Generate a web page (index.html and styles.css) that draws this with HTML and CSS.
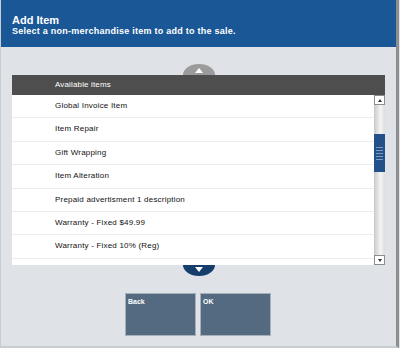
FILE: index.html
```html
<!DOCTYPE html>
<html lang="en">
  <head>
    <meta charset="UTF-8" />
    <title>Add Item</title>
    <link rel="stylesheet" href="styles.css">
  </head>
  <body>
    <div class="screen">
      <header class="title-bar">
        <div class="title">Add Item</div>
        <div class="subtitle">Select a non-merchandise item to add to the sale.</div>
      </header>

      <section class="picker">
        <div class="page-arrow up"><span class="tri"></span></div>

        <div class="list">
          <div class="list-head">Available items</div>
          <div class="list-body">
            <div class="rows">
              <div class="row">Global Invoice Item</div>
              <div class="row">Item Repair</div>
              <div class="row">Gift Wrapping</div>
              <div class="row">Item Alteration</div>
              <div class="row">Prepaid advertisment 1 description</div>
              <div class="row">Warranty - Fixed $49.99</div>
              <div class="row">Warranty - Fixed 10% (Reg)</div>
              <div class="row"></div>
            </div>
            <div class="scrollbar">
              <div class="sb-btn"><span class="sb-up"></span></div>
              <div class="sb-track">
                <div class="sb-thumb">
                  <span></span><span></span><span></span><span></span><span></span>
                </div>
              </div>
              <div class="sb-btn"><span class="sb-down"></span></div>
            </div>
          </div>
        </div>

        <div class="page-arrow down"><span class="tri"></span></div>
      </section>

      <footer class="actions">
        <div class="action">Back</div>
        <div class="action">OK</div>
      </footer>
    </div>
  </body>
</html>
```

FILE: styles.css
```css
html,
body {
  margin: 0;
  padding: 0;
  background: #dfe2e6;
}

.screen {
  width: 395px;
  height: 346px;
  background: #dfe2e6;
  border-left: 1px solid #c9ccd1;
  border-right: 3px solid #8e8e8e;
  border-bottom: 2px solid #c9ccd1;
  font-family: "Liberation Sans", Arial, sans-serif;
  display: flex;
  flex-direction: column;
}

.title-bar {
  background: #1a5797;
  color: white;
  height: 47px;
  padding: 14px 0 0 11px;
  box-sizing: border-box;
  font-weight: bold;
}

.title-bar .title {
  font-size: 11px;
  line-height: 12px;
}

.title-bar .subtitle {
  font-size: 9px;
  line-height: 11px;
  letter-spacing: 0.25px;
}

.picker {
  margin: 17px 11px 0 11px;
  display: flex;
  flex-direction: column;
  align-items: center;
}

.page-arrow {
  width: 32px;
  height: 11px;
  display: flex;
  justify-content: center;
  align-items: center;
}

.page-arrow.up {
  background: #9b9b9b;
  border-radius: 16px 16px 0 0 / 11px 11px 0 0;
  padding-top: 2px;
  box-sizing: border-box;
}

.page-arrow.down {
  background: #163e6c;
  border-radius: 0 0 16px 16px / 0 0 11px 11px;
  padding-bottom: 2px;
  box-sizing: border-box;
}

.page-arrow .tri {
  width: 0;
  height: 0;
  border-left: 4px solid transparent;
  border-right: 4px solid transparent;
}

.page-arrow.up .tri {
  border-bottom: 5px solid white;
}

.page-arrow.down .tri {
  border-top: 5px solid white;
}

.list {
  align-self: stretch;
  background: white;
}

.list-head {
  background: #4e4e4e;
  color: white;
  height: 20px;
  line-height: 20px;
  padding-left: 43px;
  font-size: 8px;
  letter-spacing: 0.15px;
}

.list-body {
  height: 170px;
  display: flex;
  overflow: hidden;
}

.rows {
  flex: 1;
}

.row {
  height: 23.4px;
  line-height: 22px;
  box-sizing: border-box;
  border-bottom: 1px solid #ececec;
  padding-left: 43px;
  font-size: 8px;
  letter-spacing: 0.2px;
  color: #111;
}

.scrollbar {
  width: 11px;
  display: flex;
  flex-direction: column;
  background: linear-gradient(to right, #c9c9c9, #f4f4f4 60%, #dcdcdc);
}

.sb-btn {
  height: 10px;
  box-sizing: border-box;
  border: 1px solid #8c8c8c;
  background: white;
  display: flex;
  justify-content: center;
  align-items: center;
}

.sb-up,
.sb-down {
  width: 0;
  height: 0;
  border-left: 2.5px solid transparent;
  border-right: 2.5px solid transparent;
}

.sb-up {
  border-bottom: 3px solid #333;
}

.sb-down {
  border-top: 3px solid #333;
}

.sb-track {
  flex: 1;
  padding-top: 29px;
}

.sb-thumb {
  height: 38px;
  background: #235088;
  display: flex;
  flex-direction: column;
  justify-content: center;
  align-items: center;
  gap: 2px;
}

.sb-thumb span {
  width: 7px;
  height: 1px;
  background: #7d9bc2;
}

.actions {
  margin-top: 17px;
  display: flex;
  justify-content: center;
  gap: 4px;
  padding-right: 1px;
}

.action {
  width: 71px;
  height: 43px;
  box-sizing: border-box;
  background: #546a80;
  border: 1px solid #a7b0ba;
  color: white;
  font-size: 7px;
  font-weight: bold;
  padding: 4px 0 0 2px;
}
```
